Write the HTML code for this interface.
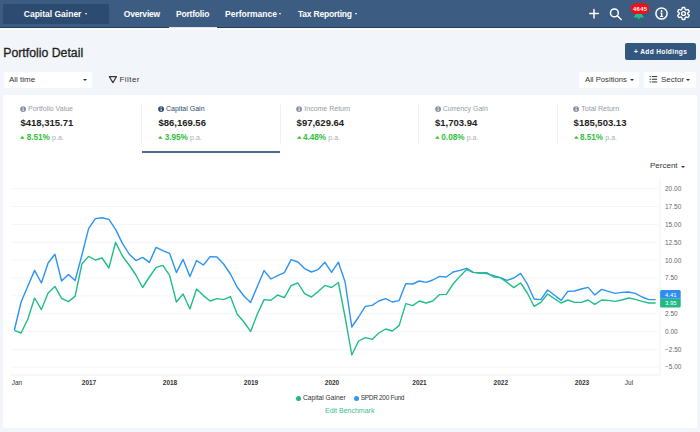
<!DOCTYPE html>
<html><head><meta charset="utf-8">
<style>
*{box-sizing:border-box;margin:0;padding:0}
html,body{width:700px;height:432px;overflow:hidden;background:#f2f5f9;font-family:"Liberation Sans",sans-serif;position:relative}
.a{position:absolute;line-height:1;white-space:nowrap}
.car{position:absolute;width:0;height:0;border-left:1.6px solid transparent;border-right:1.6px solid transparent;border-top:2px solid #fff}
.nv{color:#fff;font-size:8.5px;font-weight:bold;top:9.8px}
.box{position:absolute;background:#fff;border-radius:2px}
.lbl{position:absolute;font-size:7px;color:#939ca8;top:105.1px;line-height:1;white-space:nowrap}
.ic{position:absolute;width:5.8px;height:5.8px;border-radius:50%;background:#7f8b9b;top:105.7px}
.ic:after{content:"";position:absolute;left:2.5px;top:2.3px;width:0.9px;height:2.4px;background:#fff}
.ic:before{content:"";position:absolute;left:2.5px;top:1.1px;width:0.9px;height:0.8px;background:#fff}
.val{position:absolute;font-size:9.5px;font-weight:bold;color:#222;top:118px;line-height:1;white-space:nowrap}
.pct{position:absolute;font-size:8.2px;font-weight:bold;color:#30c03a;top:134.1px;line-height:1;white-space:nowrap}
.pa{position:absolute;font-size:7px;color:#a9aeb5;top:134.1px;line-height:1;white-space:nowrap}
.up{position:absolute;width:0;height:0;border-left:1.9px solid transparent;border-right:1.9px solid transparent;border-bottom:2px solid #35bf3c;top:135.8px}
.dv{position:absolute;width:1px;height:40px;top:104px;background:#eef1f4}
</style></head><body>
<!-- navbar -->
<div class="a" style="left:0;top:0;width:700px;height:28.2px;background:#3c5c82;border-bottom:1.9px solid #243f63"></div>
<div class="a" style="left:0;top:28.2px;width:700px;height:1.8px;background:#fbfcfd"></div>
<div class="a" style="left:3px;top:4.2px;width:105.8px;height:19.5px;background:#2d4b71;border-radius:1.5px"></div>
<div class="a nv" style="left:23.8px;font-size:8.5px">Capital Gainer</div><div class="car" style="left:84.5px;top:13px"></div>
<div class="a nv" style="left:123.8px;font-size:8.5px;letter-spacing:-0.2px">Overview</div>
<div class="a nv" style="left:176px;font-size:8.5px;letter-spacing:-0.2px">Portfolio</div>
<div class="a" style="left:168.6px;top:26.7px;width:48.4px;height:1.5px;background:#dfe5ec"></div>
<div class="a nv" style="left:225px">Performance</div><div class="car" style="left:278.8px;top:13px"></div>
<div class="a nv" style="left:297.9px;font-size:8.5px;letter-spacing:-0.2px">Tax Reporting</div><div class="car" style="left:354.6px;top:13px"></div>
<svg class="a" style="left:0;top:0" width="700" height="28">
 <g stroke="#fff" stroke-width="1.5" fill="none" stroke-linecap="round">
  <path d="M589.7 13.6H598.4M594 9.4V17.9"/>
  <circle cx="614.4" cy="12.9" r="3.9"/>
  <path d="M617.3 15.8L621.2 19.5"/>
  <circle cx="661.5" cy="13.5" r="5.6" stroke-width="1.5"/>
 </g>
 <circle cx="661.6" cy="11.0" r="0.95" fill="#fff"/>
 <path d="M660.4 12.6h2v3.5h0.7v1h-3v-1h0.8v-2.5h-0.5z" fill="#fff"/>
 <path d="M687.85 13.50 L687.85 13.35 L687.84 13.20 L687.83 13.05 L687.81 12.89 L688.04 12.70 L688.32 12.48 L688.62 12.22 L688.91 11.95 L689.19 11.65 L689.19 11.43 L689.11 11.23 L689.03 11.04 L688.94 10.85 L688.84 10.66 L688.74 10.48 L688.63 10.29 L688.52 10.12 L688.39 9.94 L688.27 9.78 L688.13 9.61 L687.94 9.50 L687.55 9.59 L687.17 9.70 L686.80 9.84 L686.46 9.97 L686.18 10.07 L686.06 9.98 L685.93 9.89 L685.81 9.81 L685.67 9.73 L685.54 9.66 L685.41 9.59 L685.27 9.53 L685.13 9.47 L685.08 9.17 L685.02 8.81 L684.95 8.43 L684.86 8.03 L684.74 7.65 L684.55 7.54 L684.34 7.51 L684.13 7.48 L683.92 7.46 L683.71 7.45 L683.50 7.45 L683.29 7.45 L683.08 7.46 L682.87 7.48 L682.66 7.51 L682.45 7.54 L682.26 7.65 L682.14 8.03 L682.05 8.43 L681.98 8.81 L681.92 9.17 L681.87 9.47 L681.73 9.53 L681.59 9.59 L681.46 9.66 L681.33 9.73 L681.19 9.81 L681.07 9.89 L680.94 9.98 L680.82 10.07 L680.54 9.97 L680.20 9.84 L679.83 9.70 L679.45 9.59 L679.06 9.50 L678.87 9.61 L678.73 9.78 L678.61 9.94 L678.48 10.12 L678.37 10.29 L678.26 10.48 L678.16 10.66 L678.06 10.85 L677.97 11.04 L677.89 11.23 L677.81 11.43 L677.81 11.65 L678.09 11.95 L678.38 12.22 L678.68 12.48 L678.96 12.70 L679.19 12.89 L679.17 13.05 L679.16 13.20 L679.15 13.35 L679.15 13.50 L679.15 13.65 L679.16 13.80 L679.17 13.95 L679.19 14.11 L678.96 14.30 L678.68 14.52 L678.38 14.78 L678.09 15.05 L677.81 15.35 L677.81 15.57 L677.89 15.77 L677.97 15.96 L678.06 16.15 L678.16 16.34 L678.26 16.53 L678.37 16.71 L678.48 16.88 L678.61 17.06 L678.73 17.22 L678.87 17.39 L679.06 17.50 L679.45 17.41 L679.83 17.30 L680.20 17.16 L680.54 17.03 L680.82 16.93 L680.94 17.02 L681.07 17.11 L681.19 17.19 L681.33 17.27 L681.46 17.34 L681.59 17.41 L681.73 17.47 L681.87 17.53 L681.92 17.83 L681.98 18.19 L682.05 18.57 L682.14 18.97 L682.26 19.35 L682.45 19.46 L682.66 19.49 L682.87 19.52 L683.08 19.54 L683.29 19.55 L683.50 19.55 L683.71 19.55 L683.92 19.54 L684.13 19.52 L684.34 19.49 L684.55 19.46 L684.74 19.35 L684.86 18.97 L684.95 18.57 L685.02 18.19 L685.08 17.83 L685.13 17.53 L685.27 17.47 L685.41 17.41 L685.54 17.34 L685.67 17.27 L685.81 17.19 L685.93 17.11 L686.06 17.02 L686.18 16.93 L686.46 17.03 L686.80 17.16 L687.17 17.30 L687.55 17.41 L687.94 17.50 L688.13 17.39 L688.27 17.22 L688.39 17.06 L688.52 16.88 L688.63 16.71 L688.74 16.53 L688.84 16.34 L688.94 16.15 L689.03 15.96 L689.11 15.77 L689.19 15.57 L689.19 15.35 L688.91 15.05 L688.62 14.78 L688.32 14.52 L688.04 14.30 L687.81 14.11 L687.83 13.95 L687.84 13.80 L687.85 13.65Z" fill="none" stroke="#fff" stroke-width="1.4" stroke-linejoin="round"/>
 <circle cx="683.5" cy="13.5" r="1.9" fill="none" stroke="#fff" stroke-width="1.4"/>
 <path d="M633.4 17.6 C634 16.4 635.2 15.6 635.6 14 L641.8 14 C642.2 15.6 643.4 16.4 644 17.6 Z" fill="#22c08f"/>
 <circle cx="638.8" cy="18.3" r="1" fill="#22c08f"/>
 <rect x="630.6" y="3.3" width="18.6" height="10.6" rx="5.3" fill="#ee1119"/>
</svg>
<div class="a" style="left:633px;top:6.5px;font-size:5.8px;font-weight:bold;color:#fff;letter-spacing:0.4px">4645</div>

<!-- header -->
<div class="a" style="left:3.2px;top:46.6px;font-size:12.3px;color:#1e1e1e;-webkit-text-stroke:0.3px #1e1e1e">Portfolio Detail</div>
<div class="a" style="left:624.6px;top:43.4px;width:71.4px;height:16.2px;background:#34577f;border-radius:2px"></div>
<div class="a" style="left:634px;top:49px;font-size:6.6px;font-weight:bold;color:#fff;letter-spacing:0.35px">+ Add Holdings</div>

<div class="box" style="left:4px;top:72px;width:88px;height:15.8px"></div>
<div class="a" style="left:9px;top:76.1px;font-size:8px;color:#333">All time</div>
<div class="car" style="left:83px;top:79.4px;border-top-color:#333;border-left-width:2px;border-right-width:2px;border-top-width:2.4px"></div>
<svg class="a" style="left:108px;top:75px" width="10" height="9"><path d="M1.3 1.6H8.5L4.9 7.6Z" fill="none" stroke="#333" stroke-width="1.1" stroke-linejoin="round"/></svg>
<div class="a" style="left:119.5px;top:76.1px;font-size:8px;color:#333;letter-spacing:0.45px">Filter</div>

<div class="box" style="left:579px;top:72px;width:60px;height:15.8px"></div>
<div class="a" style="left:585px;top:76.1px;font-size:7.7px;color:#333">All Positions</div>
<div class="car" style="left:629.6px;top:79.4px;border-top-color:#333;border-left-width:2px;border-right-width:2px;border-top-width:2.4px"></div>
<div class="box" style="left:644px;top:72px;width:52px;height:15.8px"></div>
<svg class="a" style="left:649px;top:75px" width="9" height="9"><g fill="#444"><rect x="0.6" y="1" width="1.3" height="1.1"/><rect x="0.6" y="3.7" width="1.3" height="1.1"/><rect x="0.6" y="6.4" width="1.3" height="1.1"/><rect x="2.8" y="1" width="5.4" height="1.1"/><rect x="2.8" y="3.7" width="5.4" height="1.1"/><rect x="2.8" y="6.4" width="5.4" height="1.1"/></g></svg>
<div class="a" style="left:661px;top:76.1px;font-size:8px;color:#333">Sector</div>
<div class="car" style="left:686.4px;top:79.4px;border-top-color:#333;border-left-width:2px;border-right-width:2px;border-top-width:2.4px"></div>

<!-- card -->
<div class="a" style="left:3px;top:94.5px;width:693.5px;height:333.8px;background:#fff;border-radius:2px"></div>
<div class="dv" style="left:141.2px"></div>
<div class="dv" style="left:279.8px"></div>
<div class="dv" style="left:418px"></div>
<div class="dv" style="left:557.2px"></div>
<div class="a" style="left:142px;top:151.3px;width:138.3px;height:1.6px;background:#4a6a90"></div>

<svg class="a" style="left:20.1px;top:105.5px" width="7" height="7"><circle cx="3.1" cy="3.1" r="2.95" fill="#8592a3"/><rect x="2.65" y="1.2" width="0.95" height="0.9" fill="#fff"/><rect x="2.65" y="2.6" width="0.95" height="2.5" fill="#fff"/></svg><div class="lbl" style="left:28px">Portfolio Value</div>
<div class="val" style="left:20.4px">$418,315.71</div>
<svg class="a" style="left:20.4px;top:135.6px" width="6" height="3"><path d="M0 2.8L1.9 0.5Q2.35 0 2.8 0.5L4.7 2.8Z" fill="#30c03a"/></svg><div class="pct" style="left:26.7px">8.51%</div><div class="pa" style="left:52.1px">p.a.</div>

<svg class="a" style="left:158.2px;top:105.5px" width="7" height="7"><circle cx="3.1" cy="3.1" r="2.95" fill="#2c4a70"/><rect x="2.65" y="1.2" width="0.95" height="0.9" fill="#fff"/><rect x="2.65" y="2.6" width="0.95" height="2.5" fill="#fff"/></svg><div class="lbl" style="left:166px;color:#2a4a72">Capital Gain</div>
<div class="val" style="left:158.4px">$86,169.56</div>
<svg class="a" style="left:158.4px;top:135.6px" width="6" height="3"><path d="M0 2.8L1.9 0.5Q2.35 0 2.8 0.5L4.7 2.8Z" fill="#30c03a"/></svg><div class="pct" style="left:164.7px">3.95%</div><div class="pa" style="left:190.1px">p.a.</div>

<svg class="a" style="left:296.4px;top:105.5px" width="7" height="7"><circle cx="3.1" cy="3.1" r="2.95" fill="#8592a3"/><rect x="2.65" y="1.2" width="0.95" height="0.9" fill="#fff"/><rect x="2.65" y="2.6" width="0.95" height="2.5" fill="#fff"/></svg><div class="lbl" style="left:304.3px">Income Return</div>
<div class="val" style="left:296.6px">$97,629.64</div>
<svg class="a" style="left:296.6px;top:135.6px" width="6" height="3"><path d="M0 2.8L1.9 0.5Q2.35 0 2.8 0.5L4.7 2.8Z" fill="#30c03a"/></svg><div class="pct" style="left:302.9px">4.48%</div><div class="pa" style="left:328.3px">p.a.</div>

<svg class="a" style="left:434.8px;top:105.5px" width="7" height="7"><circle cx="3.1" cy="3.1" r="2.95" fill="#8592a3"/><rect x="2.65" y="1.2" width="0.95" height="0.9" fill="#fff"/><rect x="2.65" y="2.6" width="0.95" height="2.5" fill="#fff"/></svg><div class="lbl" style="left:442.7px">Currency Gain</div>
<div class="val" style="left:435px">$1,703.94</div>
<svg class="a" style="left:435.0px;top:135.6px" width="6" height="3"><path d="M0 2.8L1.9 0.5Q2.35 0 2.8 0.5L4.7 2.8Z" fill="#30c03a"/></svg><div class="pct" style="left:441.3px">0.08%</div><div class="pa" style="left:466.7px">p.a.</div>

<svg class="a" style="left:573.4px;top:105.5px" width="7" height="7"><circle cx="3.1" cy="3.1" r="2.95" fill="#8592a3"/><rect x="2.65" y="1.2" width="0.95" height="0.9" fill="#fff"/><rect x="2.65" y="2.6" width="0.95" height="2.5" fill="#fff"/></svg><div class="lbl" style="left:581.3px">Total Return</div>
<div class="val" style="left:573.6px">$185,503.13</div>
<svg class="a" style="left:573.6px;top:135.6px" width="6" height="3"><path d="M0 2.8L1.9 0.5Q2.35 0 2.8 0.5L4.7 2.8Z" fill="#30c03a"/></svg><div class="pct" style="left:579.9px">8.51%</div><div class="pa" style="left:605.3px">p.a.</div>

<div class="a" style="left:650px;top:161.9px;font-size:8px;color:#333">Percent</div>
<div class="car" style="left:681px;top:165.7px;border-top-color:#333;border-left-width:2px;border-right-width:2px;border-top-width:2.4px"></div>

<svg class="a" style="left:0;top:0" width="700" height="432">
<!--CHART-->
<line x1="11" y1="188.7" x2="658" y2="188.7" stroke="#f4f5f7" stroke-width="1"/>
<line x1="11" y1="206.5" x2="658" y2="206.5" stroke="#f4f5f7" stroke-width="1"/>
<line x1="11" y1="224.4" x2="658" y2="224.4" stroke="#f4f5f7" stroke-width="1"/>
<line x1="11" y1="242.2" x2="658" y2="242.2" stroke="#f4f5f7" stroke-width="1"/>
<line x1="11" y1="260.1" x2="658" y2="260.1" stroke="#f4f5f7" stroke-width="1"/>
<line x1="11" y1="277.9" x2="658" y2="277.9" stroke="#f4f5f7" stroke-width="1"/>
<line x1="11" y1="295.8" x2="658" y2="295.8" stroke="#f4f5f7" stroke-width="1"/>
<line x1="11" y1="313.6" x2="658" y2="313.6" stroke="#f4f5f7" stroke-width="1"/>
<line x1="11" y1="331.5" x2="658" y2="331.5" stroke="#f4f5f7" stroke-width="1"/>
<line x1="11" y1="349.4" x2="658" y2="349.4" stroke="#f4f5f7" stroke-width="1"/>
<line x1="11" y1="367.2" x2="658" y2="367.2" stroke="#f4f5f7" stroke-width="1"/>
<line x1="11" y1="375" x2="660" y2="375" stroke="#eceef1" stroke-width="1"/>
<line x1="660" y1="180" x2="660" y2="375" stroke="#f0f2f4" stroke-width="1"/>
<polyline fill="none" stroke="#2d93f2" stroke-width="1.4" stroke-linejoin="round" points="14.4,330.0 21.1,302.0 27.9,286.0 34.6,270.4 41.4,283.0 48.1,263.0 54.9,254.2 61.6,281.0 68.4,274.6 75.1,280.6 81.9,255.0 88.6,228.6 95.4,218.6 102.1,217.8 108.9,219.4 115.6,229.4 122.4,243.4 129.1,254.0 135.9,260.6 142.6,257.4 149.4,262.4 156.1,247.4 162.9,250.6 169.6,253.4 176.4,272.6 183.1,259.4 189.9,276.6 196.6,260.6 203.4,265.0 210.1,256.6 216.9,257.0 223.6,264.0 230.4,274.0 237.1,287.0 243.9,296.0 250.6,302.4 257.4,286.3 264.1,270.6 270.9,279.0 277.6,275.6 284.4,272.6 291.1,259.6 297.9,262.0 304.6,268.6 311.4,272.0 318.1,269.6 324.9,262.3 331.6,272.3 338.4,262.2 345.1,282.0 351.8,327.0 358.6,317.0 365.3,306.4 372.1,305.4 378.8,301.0 385.6,298.6 392.3,302.0 399.1,300.6 405.8,283.6 412.6,284.0 419.3,281.0 426.1,282.4 432.8,280.0 439.6,276.4 446.3,277.0 453.1,272.0 459.8,270.4 466.6,268.4 473.3,272.4 480.1,273.0 486.8,273.6 493.6,275.6 500.3,277.6 507.1,280.4 513.8,278.0 520.6,273.4 527.3,284.0 534.1,299.0 540.8,299.6 547.6,290.0 554.3,295.0 561.1,300.4 567.8,291.4 574.6,291.0 581.3,289.0 588.1,287.4 594.8,295.0 601.6,289.4 608.3,291.4 615.1,293.4 621.8,292.4 628.6,292.0 635.3,293.4 642.1,297.0 648.8,299.6 655.6,299.6"/>
<polyline fill="none" stroke="#20bd89" stroke-width="1.4" stroke-linejoin="round" points="14.4,330.4 21.1,333.0 27.9,319.0 34.6,298.0 41.4,309.6 48.1,293.0 54.9,286.4 61.6,298.4 68.4,301.6 75.1,296.4 81.9,264.0 88.6,256.4 95.4,260.0 102.1,258.0 108.9,268.0 115.6,242.2 122.4,256.0 129.1,265.0 135.9,275.0 142.6,287.5 149.4,277.0 156.1,267.4 162.9,265.4 169.6,275.4 176.4,302.0 183.1,294.0 189.9,309.0 196.6,289.0 203.4,295.6 210.1,301.0 216.9,298.6 223.6,299.6 230.4,296.6 237.1,314.0 243.9,322.0 250.6,331.4 257.4,314.0 264.1,299.6 270.9,300.2 277.6,295.0 284.4,297.6 291.1,285.6 297.9,283.0 304.6,293.6 311.4,297.0 318.1,291.6 324.9,285.4 331.6,287.5 338.4,282.5 345.1,317.0 351.8,355.0 358.6,341.0 365.3,337.6 372.1,339.4 378.8,333.0 385.6,329.0 392.3,331.0 399.1,325.6 405.8,303.6 412.6,305.6 419.3,301.0 426.1,303.0 432.8,301.0 439.6,294.6 446.3,294.4 453.1,284.0 459.8,276.4 466.6,269.6 473.3,272.4 480.1,273.0 486.8,272.6 493.6,277.0 500.3,277.6 507.1,282.4 513.8,287.6 520.6,283.0 527.3,293.0 534.1,306.3 540.8,302.4 547.6,294.0 554.3,298.6 561.1,303.0 567.8,300.0 574.6,302.4 581.3,302.4 588.1,300.0 594.8,304.4 601.6,300.0 608.3,300.4 615.1,301.4 621.8,300.0 628.6,298.0 635.3,299.4 642.1,301.4 648.8,303.0 655.6,303.0"/>
<text x="665" y="191.3" font-size="6.5" fill="#666">20.00</text>
<text x="665" y="209.1" font-size="6.5" fill="#666">17.50</text>
<text x="665" y="226.9" font-size="6.5" fill="#666">15.00</text>
<text x="665" y="244.7" font-size="6.5" fill="#666">12.50</text>
<text x="665" y="262.5" font-size="6.5" fill="#666">10.00</text>
<text x="665" y="280.3" font-size="6.5" fill="#666">7.50</text>
<text x="665" y="298.1" font-size="6.5" fill="#666">5.00</text>
<text x="665" y="315.9" font-size="6.5" fill="#666">2.50</text>
<text x="665" y="333.7" font-size="6.5" fill="#666">0.00</text>
<text x="665" y="351.5" font-size="6.5" fill="#666">−2.50</text>
<text x="665" y="369.3" font-size="6.5" fill="#666">−5.00</text>
<text x="17" y="385.3" text-anchor="middle" font-size="6.5" fill="#333" font-weight="normal">Jan</text>
<text x="89" y="385.3" text-anchor="middle" font-size="6.5" fill="#333" font-weight="bold">2017</text>
<text x="170" y="385.3" text-anchor="middle" font-size="6.5" fill="#333" font-weight="bold">2018</text>
<text x="251" y="385.3" text-anchor="middle" font-size="6.5" fill="#333" font-weight="bold">2019</text>
<text x="332" y="385.3" text-anchor="middle" font-size="6.5" fill="#333" font-weight="bold">2020</text>
<text x="419.5" y="385.3" text-anchor="middle" font-size="6.5" fill="#333" font-weight="bold">2021</text>
<text x="500.8" y="385.3" text-anchor="middle" font-size="6.5" fill="#333" font-weight="bold">2022</text>
<text x="582" y="385.3" text-anchor="middle" font-size="6.5" fill="#333" font-weight="bold">2023</text>
<text x="629" y="385.3" text-anchor="middle" font-size="6.5" fill="#333" font-weight="normal">Jul</text>
<path d="M660.1 298.7V291.6Q660.1 290.1 661.6 290.1H679.2Q680.7 290.1 680.7 291.6V298.7Z" fill="#2b8ef0"/><text x="665" y="296.5" font-size="6" fill="#fff">4.41</text>
<path d="M660.1 298.7V306.1Q660.1 307.6 661.6 307.6H679.2Q680.7 307.6 680.7 306.1V298.7Z" fill="#21b886"/><text x="665" y="305.4" font-size="6" fill="#fff">3.95</text>
<!--/CHART-->
</svg>

<div class="a" style="left:295.7px;top:395.6px;width:5.2px;height:5.2px;border-radius:50%;background:#21b886"></div>
<div class="a" style="left:302.9px;top:395.1px;font-size:6.7px;color:#333">Capital Gainer</div>
<div class="a" style="left:353.6px;top:395.6px;width:5.2px;height:5.2px;border-radius:50%;background:#2b9af2"></div>
<div class="a" style="left:360.7px;top:395.1px;font-size:6.5px;letter-spacing:-0.3px;color:#333">SPDR 200 Fund</div>
<div class="a" style="left:325px;top:406.5px;font-size:7px;color:#3cbf8f">Edit Benchmark</div>
</body></html>
